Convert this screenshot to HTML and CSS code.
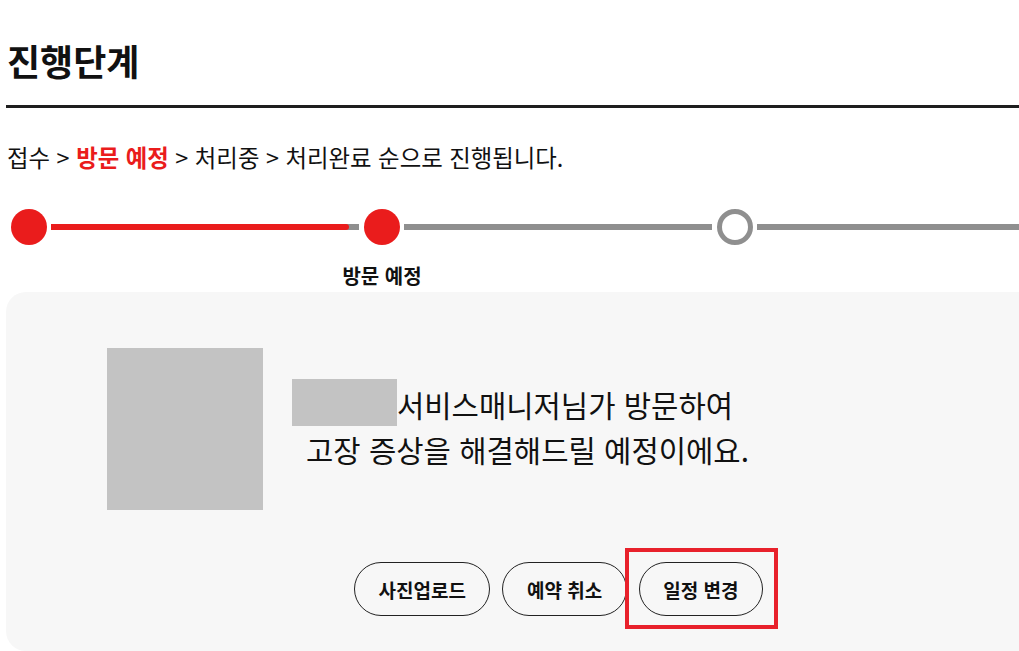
FILE: index.html
```html
<!DOCTYPE html>
<html lang="ko">
<head>
  <meta charset="UTF-8" />
  <meta name="viewport" content="width=device-width, initial-scale=1.0"/>
  <title>진행단계</title>
  <link rel="stylesheet" href="styles.css">
</head>

<body>
  <div class="wrap">
    <h1 class="title">진행단계</h1>

    <p class="flow">
      접수 &gt; <strong class="now">방문 예정</strong> &gt; 처리중 &gt; 처리완료 순으로 진행됩니다.
    </p>

    <div class="steps">
      <span class="dot done"></span>
      <span class="track"><span class="fill" style="width: 298px;"></span></span>
      <span class="dot done"></span>
      <span class="track"></span>
      <span class="dot"></span>
      <span class="track"></span>
      <span class="dot"></span>
      <span class="step-label">방문 예정</span>
    </div>

    <div class="card">
      <div class="visit">
        <div class="thumb"></div>
        <p class="msg">
          <span class="line first"><span class="name"></span>서비스매니저님가 방문하여</span>
          <span class="line">고장 증상을 해결해드릴 예정이에요.</span>
        </p>
      </div>

      <div class="actions">
        <button class="btn">사진업로드</button>
        <button class="btn">예약 취소</button>
        <span class="mark">
          <button class="btn">일정 변경</button>
        </span>
      </div>
    </div>
  </div>
</body>
</html>
```

FILE: styles.css
```css
:root {
  --red: #ea1c1c;
  --gray: #8f8f8f;
  --txt: #111;
  --panel: #f7f7f7;
  --ph: #c3c3c3;
}

* { box-sizing: border-box; }

body {
  margin: 0;
  overflow: hidden;
  background: #fff;
  color: var(--txt);
  font-family: "Noto Sans CJK KR", "Noto Sans", sans-serif;
}

.wrap {
  width: 1100px;
  margin-left: 6px;
}

.title {
  margin: 0;
  padding: 36px 0 21px 1px;
  font-size: 36px;
  line-height: 48px;
  font-weight: 700;
  border-bottom: 3px solid #1e1e1e;
}

.flow {
  margin: 0;
  padding: 34px 0 0 1px;
  font-size: 23.4px;
  line-height: 30px;
}

.now {
  color: var(--red);
  font-weight: 700;
}

/* progress */
.steps {
  display: grid;
  grid-template-columns: 36px auto 36px auto 36px auto 36px;
  align-items: center;
  row-gap: 20px;
  margin-top: 37px;
  padding-left: 5px;
}

.dot {
  width: 36px;
  height: 36px;
  border-radius: 50%;
  border: 5px solid var(--gray);
  background: #fff;
}

.dot.done {
  border: none;
  background: var(--red);
}

.track {
  display: block;
  width: 308px;
  height: 6px;
  margin: 0 5px 0 4px;
  background: var(--gray);
}

.fill {
  display: block;
  height: 100%;
  border-radius: 0 3px 3px 0;
  background: var(--red);
}

.step-label {
  grid-row: 2;
  grid-column: 3;
  justify-self: center;
  white-space: nowrap;
  font-size: 20px;
  font-weight: 700;
  line-height: 22px;
}

/* card */
.card {
  margin-top: 5px;
  height: 359px;
  padding: 56px 0 0 101px;
  border-radius: 20px;
  background: var(--panel);
}

.visit {
  display: flex;
  align-items: flex-start;
}

.thumb {
  width: 156px;
  height: 162px;
  background: var(--ph);
}

.msg {
  width: 471px;
  margin: 31px 0 0 29px;
  text-align: center;
  font-size: 29.7px;
  line-height: 45px;
}

.line {
  display: block;
  white-space: nowrap;
}

.line.first {
  padding-right: 30px;
}

.name {
  display: inline-block;
  width: 105px;
  height: 47px;
  vertical-align: -9px;
  background: var(--ph);
}

.actions {
  display: flex;
  align-items: center;
  gap: 12px;
  margin: 52px 0 0 247px;
}

.btn {
  height: 54px;
  padding: 0 23.5px;
  border: 1px solid #222;
  border-radius: 27px;
  background: transparent;
  color: var(--txt);
  font-family: inherit;
  font-size: 19px;
  font-weight: 700;
  cursor: pointer;
}

.mark {
  position: relative;
  display: inline-flex;
}

.mark::after {
  content: "";
  position: absolute;
  top: -14px;
  left: -14px;
  right: -15px;
  bottom: -13px;
  border: 4px solid #e8212b;
  pointer-events: none;
}
```
